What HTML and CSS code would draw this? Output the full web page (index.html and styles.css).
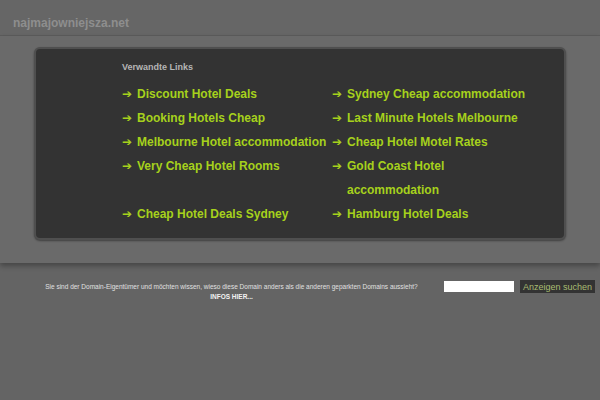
FILE: index.html
```html
<!DOCTYPE html>
<html>
<head>
    <title>najmajowniejsza.net</title>
    <link rel="stylesheet" href="styles.css">
</head>
<body>
    <div class="header">
        <span class="domain">najmajowniejsza.net</span>
    </div>

    <div class="band">
        <div class="panel">
            <h2 class="title">Verwandte Links</h2>
            <div class="links">
                <a class="link" href="#"><span class="arrow">&#10132;</span><span>Discount Hotel Deals</span></a>
                <a class="link" href="#"><span class="arrow">&#10132;</span><span>Sydney Cheap accommodation</span></a>
                <a class="link" href="#"><span class="arrow">&#10132;</span><span>Booking Hotels Cheap</span></a>
                <a class="link" href="#"><span class="arrow">&#10132;</span><span>Last Minute Hotels Melbourne</span></a>
                <a class="link" href="#"><span class="arrow">&#10132;</span><span>Melbourne Hotel accommodation</span></a>
                <a class="link" href="#"><span class="arrow">&#10132;</span><span>Cheap Hotel Motel Rates</span></a>
                <a class="link" href="#"><span class="arrow">&#10132;</span><span>Very Cheap Hotel Rooms</span></a>
                <a class="link" href="#"><span class="arrow">&#10132;</span><span>Gold Coast Hotel accommodation</span></a>
                <a class="link" href="#"><span class="arrow">&#10132;</span><span>Cheap Hotel Deals Sydney</span></a>
                <a class="link" href="#"><span class="arrow">&#10132;</span><span>Hamburg Hotel Deals</span></a>
            </div>
        </div>
    </div>

    <div class="footer">
        <div class="owner">
            Sie sind der Domain-Eigent&uuml;mer und m&ouml;chten wissen, wieso diese Domain anders als die anderen geparkten Domains aussieht?<br>
            <a class="infos" href="#">INFOS HIER...</a>
        </div>
        <form class="search" onsubmit="event.preventDefault()">
            <input type="text" class="search-input">
            <input type="submit" class="search-btn" value="Anzeigen suchen">
        </form>
    </div>
</body>
</html>
```

FILE: styles.css
```css
body {
    margin: 0;
    padding: 0;
    background-color: #646464;
    font-family: "Liberation Sans", Arial, sans-serif;
}
.header {
    height: 36px;
    background-color: #666;
    border-bottom: 1px solid #5c5c5c;
    box-sizing: border-box;
    padding-left: 13px;
    line-height: 44px;
}
.domain {
    color: #8e8e8e;
    font-size: 12px;
    font-weight: bold;
}
.band {
    background-color: #6a6a6a;
    padding: 11px 34px 23px 34px;
    box-shadow: 0 3px 5px rgba(0, 0, 0, 0.3);
}
.panel {
    background-color: #333;
    border: 2px solid #4f4f4f;
    border-radius: 6px;
    box-shadow: 0 1px 2px rgba(0, 0, 0, 0.4);
    padding: 13px 0 12px 86px;
}
.title {
    margin: 0 0 10px 0;
    color: #b5b5b5;
    font-size: 9px;
    font-weight: bold;
}
.links {
    display: grid;
    grid-template-columns: 210px 200px;
}
.link {
    display: flex;
    color: #a6d11c;
    font-size: 12px;
    font-weight: bold;
    line-height: 24px;
    text-decoration: none;
}
.arrow {
    font-family: "DejaVu Sans", sans-serif;
    font-size: 12px;
    width: 15px;
    flex-shrink: 0;
}
.footer {
    display: flex;
    align-items: flex-start;
    padding: 17px 5px 0 24px;
}
.owner {
    width: 416px;
    padding-top: 2px;
    text-align: center;
    color: #e0e0e0;
    font-size: 6.5px;
    line-height: 10px;
}
.infos {
    color: #f2f2f2;
    font-weight: bold;
    text-decoration: none;
}
.search {
    display: flex;
    margin-left: 5px;
    gap: 6px;
}
.search-input {
    width: 70px;
    height: 11px;
    border: 0;
    padding: 0;
    margin: 1px 0 0 0;
    background-color: #fff;
}
.search-btn {
    height: 13px;
    border: 0;
    padding: 0 3px;
    margin: 0;
    background-color: #333;
    color: #a9bd72;
    font-family: "Liberation Sans", Arial, sans-serif;
    font-size: 9px;
}
```
